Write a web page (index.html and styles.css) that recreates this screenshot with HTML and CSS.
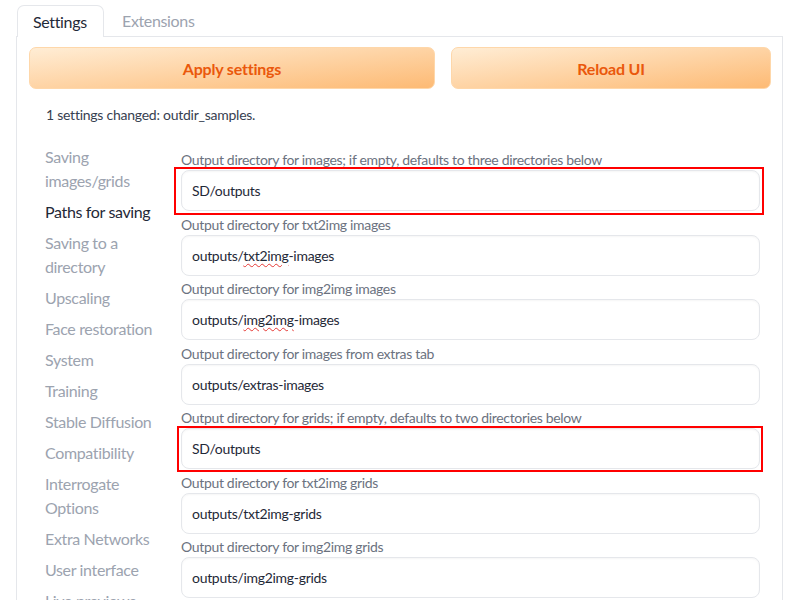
FILE: index.html
```html
<!DOCTYPE html>
<html>
<head>
<meta charset="utf-8">
<link rel="stylesheet" href="styles.css">
</head>
<body>
<div class="app">
  <div class="tabs">
    <div class="tab active">Settings</div>
    <div class="tab">Extensions</div>
  </div>
  <div class="panel">
    <div class="actions">
      <button class="btn">Apply settings</button>
      <button class="btn">Reload UI</button>
    </div>
    <div class="message">1 settings changed: outdir_samples.</div>
    <div class="settings">
      <nav class="nav">
        <div class="nav-item">Saving images/grids</div>
        <div class="nav-item current">Paths for saving</div>
        <div class="nav-item">Saving to a directory</div>
        <div class="nav-item">Upscaling</div>
        <div class="nav-item">Face restoration</div>
        <div class="nav-item">System</div>
        <div class="nav-item">Training</div>
        <div class="nav-item">Stable Diffusion</div>
        <div class="nav-item">Compatibility</div>
        <div class="nav-item">Interrogate Options</div>
        <div class="nav-item">Extra Networks</div>
        <div class="nav-item">User interface</div>
        <div class="nav-item">Live previews</div>
      </nav>
      <div class="fields">
        <div class="field">
          <div class="label">Output directory for images; if empty, defaults to three directories below</div>
          <div class="box marked marked-a">SD/outputs</div>
        </div>
        <div class="field">
          <div class="label">Output directory for txt2img images</div>
          <div class="box">outputs/<span class="typo">txt2img</span>-images</div>
        </div>
        <div class="field">
          <div class="label">Output directory for img2img images</div>
          <div class="box">outputs/<span class="typo">img2img</span>-images</div>
        </div>
        <div class="field">
          <div class="label">Output directory for images from extras tab</div>
          <div class="box">outputs/extras-images</div>
        </div>
        <div class="field">
          <div class="label">Output directory for grids; if empty, defaults to two directories below</div>
          <div class="box marked marked-b">SD/outputs</div>
        </div>
        <div class="field">
          <div class="label">Output directory for txt2img grids</div>
          <div class="box">outputs/txt2img-grids</div>
        </div>
        <div class="field">
          <div class="label">Output directory for img2img grids</div>
          <div class="box">outputs/img2img-grids</div>
        </div>
      </div>
    </div>
  </div>
</div>
</body>
</html>
```

FILE: styles.css
```css
html, body {
  margin: 0;
  padding: 0;
  background: #ffffff;
  overflow: hidden;
}
body {
  font-family: Lato, "Liberation Sans", sans-serif;
  color: #1f2937;
}
.app {
  padding: 5px 17px 0 16px;
}
.tabs {
  display: flex;
  height: 31px;
  margin-left: 1px;
}
.tab {
  font-size: 16px;
  letter-spacing: -0.35px;
  color: #9ca3af;
  padding: 0 16px;
  line-height: 31px;
  box-sizing: border-box;
  margin-right: 2px;
}
.tab.active {
  color: #1f2937;
  border: 1px solid #e5e7eb;
  border-bottom: none;
  border-radius: 7px 7px 0 0;
  background: #fff;
  width: 87px;
  padding: 0 15px;
  position: relative;
  z-index: 1;
  height: 32px;
}
.panel {
  border: 1px solid #e5e7eb;
  border-bottom: none;
  padding: 10px 11px 0 12px;
  height: 600px;
}
.actions {
  display: grid;
  grid-template-columns: 406fr 320fr;
  gap: 16px;
}
.btn {
  height: 42px;
  border: 1px solid #fed7aa;
  border-radius: 7px;
  background: linear-gradient(to bottom right, #ffedd5, #fdba74);
  color: #ea580c;
  font-family: inherit;
  font-size: 16px;
  font-weight: 700;
  letter-spacing: -0.2px;
}
.message {
  font-size: 14px;
  letter-spacing: -0.25px;
  line-height: 20px;
  color: #374151;
  margin: 16px 0 0 17px;
}
.settings {
  display: flex;
  margin-top: 20px;
}
.nav {
  width: 120px;
  margin-left: 16px;
  margin-right: 16px;
  display: flex;
  flex-direction: column;
  gap: 7px;
}
.nav-item {
  font-size: 16px;
  letter-spacing: -0.35px;
  line-height: 24px;
  color: #9ca3af;
}
.nav-item.current {
  color: #1f2937;
}
.fields {
  flex: 1;
  margin-top: 5px;
  margin-right: 11px;
}
.field {
  margin-bottom: 3.5px;
}
.label {
  font-size: 14px;
  letter-spacing: -0.33px;
  line-height: 18px;
  padding: 1px 0 1px;
  color: #6b7280;
}
.field + .field .label {
  padding: 1px 0 1px;
}
.box {
  position: relative;
  height: 41px;
  box-sizing: border-box;
  border: 1px solid #e5e7eb;
  border-radius: 8px;
  box-shadow: inset 0 1px 2px rgba(0,0,0,0.04);
  padding: 0 10px;
  font-size: 14px;
  letter-spacing: -0.3px;
  line-height: 39px;
  color: #1f2937;
}
.marked::after {
  content: "";
  position: absolute;
  border: 2px solid #ff0000;
}
.marked-a::after {
  top: -4px;
  left: -8px;
  right: -5px;
  bottom: -5px;
}
.marked-b::after {
  top: -3px;
  left: -5px;
  right: -4px;
  bottom: -4px;
}
.typo {
  text-decoration: underline wavy #e53935;
  text-decoration-thickness: 1px;
  text-underline-offset: 2px;
}
```
